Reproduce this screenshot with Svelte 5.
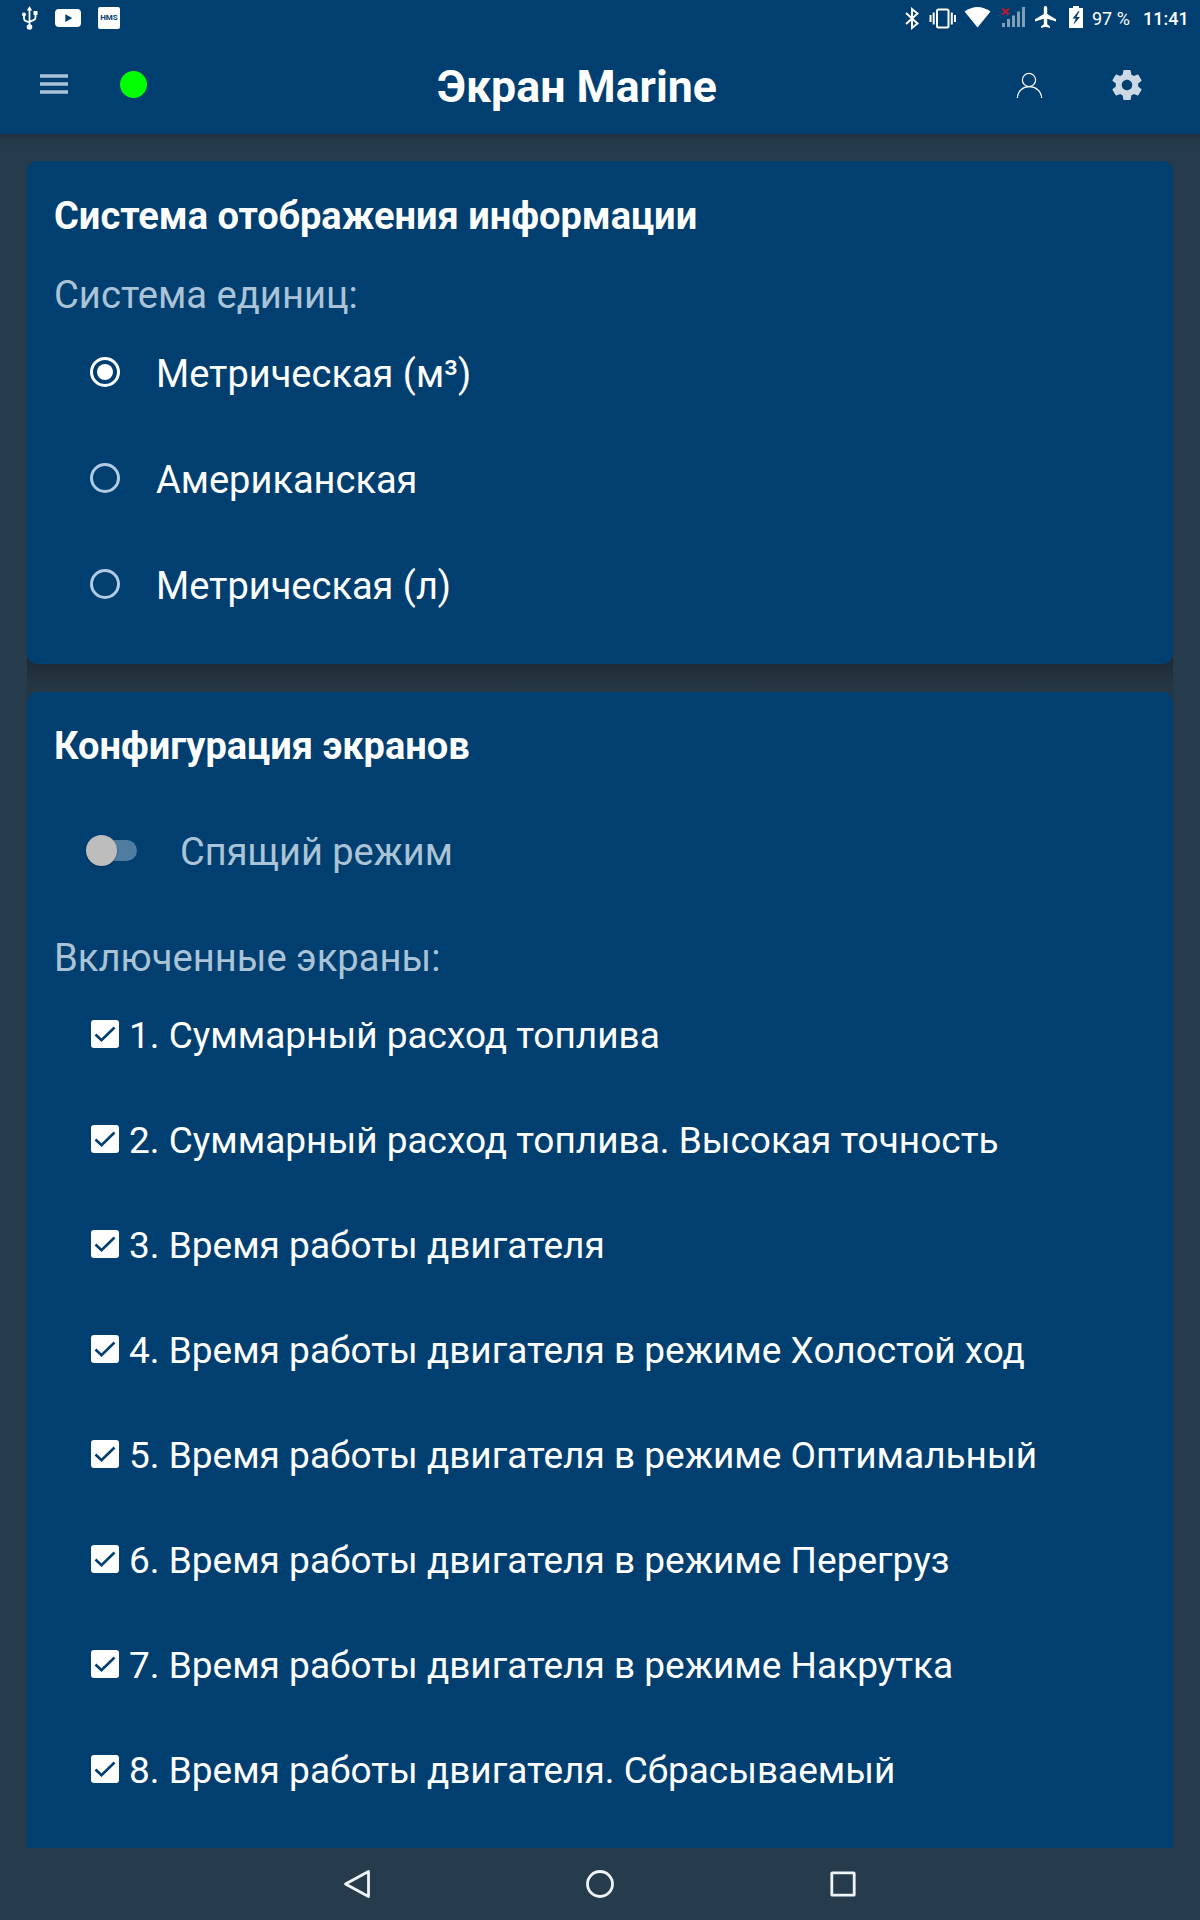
<script>
  let unitSystem = 'm3';
  let sleepMode = false;

  const units = [
    { id: 'm3', label: 'Метрическая (м³)' },
    { id: 'us', label: 'Американская' },
    { id: 'l', label: 'Метрическая (л)' }
  ];

  let screens = [
    { name: 'Суммарный расход топлива', enabled: true },
    { name: 'Суммарный расход топлива. Высокая точность', enabled: true },
    { name: 'Время работы двигателя', enabled: true },
    { name: 'Время работы двигателя в режиме Холостой ход', enabled: true },
    { name: 'Время работы двигателя в режиме Оптимальный', enabled: true },
    { name: 'Время работы двигателя в режиме Перегруз', enabled: true },
    { name: 'Время работы двигателя в режиме Накрутка', enabled: true },
    { name: 'Время работы двигателя. Сбрасываемый', enabled: true }
  ];
</script>

<div class="screen">
  <header>
    <div class="status-bar">
      <div class="status-left">
        <!-- usb -->
        <svg width="16" height="36" viewBox="22 0 16 36">
          <g fill="none" stroke="#fff" stroke-width="1.8">
            <path d="M29.5 10v17M24 16v2.5q0 2 2 2.6l3.5 1.4M35.5 15v2.5q0 2-2 2.6l-4 1.7" />
          </g>
          <path d="M29.5 6l2.700 4.500h-5.400zM33.500 11h4v4h-4z" fill="#fff" />
          <circle cx="24" cy="14.500" r="2" fill="#fff" />
          <circle cx="29.500" cy="27" r="2.800" fill="#fff" />
        </svg>
        <!-- youtube -->
        <svg width="26" height="36" viewBox="56 0 26 36">
          <rect x="56" y="9" width="26" height="18" rx="4" fill="#fff" />
          <path d="M66.300 14.200v7.800l7-3.900z" fill="#003f70" />
        </svg>
        <div class="hms">HMS</div>
      </div>
      <div class="status-right">
        <!-- bluetooth -->
        <svg width="20" height="36" viewBox="905 0 20 36">
          <path d="M906 13l11.500 10.500-5.500 4.500V9l5.500 4.500L906 24" fill="none" stroke="#fff" stroke-width="2" />
        </svg>
        <!-- vibrate -->
        <svg width="36" height="36" viewBox="925 0 36 36">
          <g fill="none" stroke="#fff" stroke-width="2">
            <rect x="937" y="9.500" width="11.500" height="18" rx="1.500" />
            <path d="M933.700 12.500v12M930.500 15v7M951.800 12.500v12M955 15v7" />
          </g>
        </svg>
        <!-- wifi -->
        <svg width="36" height="36" viewBox="961 0 36 36">
          <path d="M964.500 11.500Q977.500 2.500 990.500 11.500L977.500 27.500z" fill="#fff" />
        </svg>
        <!-- cell signal, no service -->
        <svg width="34" height="36" viewBox="997 0 34 36">
          <path d="M1002 23h3v4h-3zM1007 19h3v8h-3zM1012 15.500h3v11.500h-3zM1017 11.500h3v15.500h-3zM1022 7h3v20h-3z" fill="#7f9fb8" />
          <path d="M1002.500 8.500l6.500 6M1009 8.500l-6.500 6" stroke="#c01a2c" stroke-width="2" />
        </svg>
        <!-- airplane -->
        <svg width="34" height="36" viewBox="1031 0 34 36">
          <path d="M1045.500 6c1.100 0 1.700.9 1.700 2v6l8.800 5.200v2.300l-8.800-2.800v5.500l2.700 2v1.800l-4.400-1.200-4.400 1.200v-1.800l2.700-2v-5.500l-8.800 2.800v-2.300l8.800-5.200V8c0-1.100.6-2 1.700-2z" fill="#fff" />
        </svg>
        <!-- battery -->
        <svg width="27" height="36" viewBox="1065 0 27 36">
          <path d="M1073 6h6v2h4v20h-14V8h4z" fill="#fff" />
          <path d="M1078.500 11l-6 7.500h3.300l-2.600 6.500 6.800-8h-3.500l3-6z" fill="#003f70" />
        </svg>
        <span class="battery">97 %</span>
        <span class="clock">11:41</span>
      </div>
    </div>

    <div class="toolbar">
      <button class="menu" aria-label="Меню">
        <svg width="28" height="22" viewBox="0 0 28 22">
          <path d="M0 3h28M0 11h28M0 19h28" stroke="#a8c3da" stroke-width="3.600" />
        </svg>
      </button>
      <span class="connection"></span>
      <h1>Экран Marine</h1>
      <button class="user" aria-label="Профиль">
        <svg width="28" height="28" viewBox="0 0 28 28">
          <g fill="none" stroke="#fff" stroke-width="1.200">
            <circle cx="14" cy="9" r="6.600" />
            <path d="M2.300 27c.5-7 5.500-11.300 12-11.300S26.200 20 26.700 27" />
          </g>
        </svg>
      </button>
      <button class="settings" aria-label="Настройки">
        <svg width="36" height="36" viewBox="0 0 24 24">
          <path
            fill="#ccd8e3"
            d="M19.430 12.980c.04-.32.07-.64.07-.98s-.03-.66-.07-.98l2.110-1.650c.19-.15.24-.42.12-.64l-2-3.460c-.12-.22-.39-.3-.61-.22l-2.490 1c-.52-.4-1.080-.73-1.690-.98l-.38-2.650C14.460 2.180 14.250 2 14 2h-4c-.25 0-.46.18-.49.42l-.38 2.650c-.61.25-1.170.59-1.690.98l-2.490-1c-.23-.09-.49 0-.61.22l-2 3.460c-.13.22-.07.49.12.64l2.110 1.650c-.04.32-.07.65-.07.98s.03.66.07.98l-2.110 1.650c-.19.15-.24.42-.12.64l2 3.460c.12.22.39.3.61.22l2.490-1c.52.4 1.080.73 1.690.98l.38 2.650c.03.24.24.42.49.42h4c.25 0 .46-.18.49-.42l.38-2.650c.61-.25 1.170-.59 1.690-.98l2.490 1c.23.09.49 0 .61-.22l2-3.460c.12-.22.07-.49-.12-.64l-2.110-1.650zM12 15.500c-1.930 0-3.500-1.570-3.500-3.500s1.570-3.500 3.500-3.500 3.500 1.570 3.500 3.500-1.570 3.500-3.500 3.500z"
          />
        </svg>
      </button>
    </div>
  </header>

  <main>
    <div class="cards">
      <section class="card">
        <h2>Система отображения информации</h2>
        <p class="label">Система единиц:</p>
        <div class="radio-list">
          {#each units as unit}
            <label class="radio-row">
              <input type="radio" value={unit.id} bind:group={unitSystem} />
              <span class="radio" class:checked={unitSystem === unit.id}></span>
              <span>{unit.label}</span>
            </label>
          {/each}
        </div>
      </section>

      <section class="card screens">
        <h2>Конфигурация экранов</h2>
        <label class="switch-row">
          <input type="checkbox" bind:checked={sleepMode} />
          <span class="switch" class:on={sleepMode}>
            <span class="thumb"></span>
          </span>
          <span>Спящий режим</span>
        </label>
        <p class="label">Включенные экраны:</p>
        {#each screens as screen, i}
          <label class="check-row">
            <input type="checkbox" bind:checked={screen.enabled} />
            <span class="checkbox" class:checked={screen.enabled}>
              {#if screen.enabled}
                <svg width="28" height="28" viewBox="0 0 28 28">
                  <path d="M4.500 14.500l6 5.800L23.500 7.500" fill="none" stroke="#003f70" stroke-width="2.600" />
                </svg>
              {/if}
            </span>
            <span>{i + 1}. {screen.name}</span>
          </label>
        {/each}
      </section>
    </div>
  </main>

  <nav>
    <svg width="32" height="32" viewBox="0 0 32 32">
      <path d="M27.500 3.500v25L4.500 16z" />
    </svg>
    <svg width="32" height="32" viewBox="0 0 32 32">
      <circle cx="16" cy="16" r="12.500" />
    </svg>
    <svg width="32" height="32" viewBox="0 0 32 32">
      <rect x="4.800" y="4.800" width="22.400" height="22.400" rx="0.500" />
    </svg>
  </nav>
</div>

<style>
  :global(body) {
    margin: 0;
    background: #263c4c;
  }

  .screen {
    display: flex;
    flex-direction: column;
    width: 1200px;
    height: 1920px;
    overflow: hidden;
    background: #263c4c;
    color: #fff;
    font-family: Roboto, sans-serif;
    font-size: 38px;
  }

  h1,
  h2,
  p {
    margin: 0;
  }

  svg {
    display: block;
    flex: none;
  }

  input {
    appearance: none;
    position: absolute;
    margin: 0;
    opacity: 0;
  }

  button {
    display: block;
    padding: 0;
    border: none;
    background: none;
  }

  header {
    flex: none;
    height: 134px;
    background: #003f70;
    box-shadow: 0 2px 6px rgba(32, 20, 40, 0.5);
    z-index: 1;
  }

  .status-bar {
    display: flex;
    justify-content: space-between;
    height: 36px;
    padding: 0 13px 0 22px;
  }

  .status-left,
  .status-right {
    display: flex;
    align-items: center;
  }

  .status-left {
    gap: 17px;
  }

  .hms {
    width: 22px;
    height: 22px;
    border-radius: 2px;
    background: #fff;
    color: #003f70;
    font-size: 8px;
    font-weight: 700;
    line-height: 22px;
    text-align: center;
  }

  .battery {
    width: 51px;
    font-size: 18px;
    white-space: nowrap;
  }

  .clock {
    width: 44px;
    font-size: 18px;
    font-weight: 500;
    white-space: nowrap;
  }

  .toolbar {
    display: flex;
    align-items: center;
    height: 98px;
    padding: 0 55px 0 40px;
  }

  .menu {
    margin-bottom: 3px;
  }

  .connection {
    width: 27px;
    height: 27px;
    margin: 0 0 1px 52px;
    border-radius: 50%;
    background: #00ff00;
  }

  h1 {
    flex: 1;
    margin-left: 290px;
    font-size: 44.7px;
    font-weight: 700;
    line-height: 60px;
    padding-top: 4px;
    white-space: nowrap;
  }

  .user {
    margin-right: 66px;
  }

  main {
    flex: 1;
    min-height: 0;
    overflow: hidden;
    padding: 27px 27px 0;
  }

  /* the strip between the two cards is a shade darker than the page */
  .cards {
    display: flex;
    flex-direction: column;
    gap: 28px;
    border-radius: 10px;
    background: linear-gradient(#202d38 503px, #263744 531px);
  }

  .card {
    height: 503px;
    border-radius: 10px;
    background: #003f70;
  }

  .card.screens {
    height: 1180px;
  }

  h2 {
    padding-left: 27px;
    font-size: 38px;
    font-weight: 700;
    line-height: 110px;
  }

  .label {
    padding-left: 27px;
    font-size: 38.2px;
    line-height: 48px;
    color: #abc3d6;
  }

  .radio-list {
    padding-top: 2px;
  }

  .radio-row,
  .check-row,
  .switch-row {
    display: flex;
    align-items: center;
    white-space: nowrap;
  }

  .radio-row {
    height: 106px;
    padding-left: 63px;
    gap: 36px;
  }

  .radio {
    display: flex;
    align-items: center;
    justify-content: center;
    box-sizing: border-box;
    width: 30px;
    height: 30px;
    margin-bottom: 4px;
    border: 3px solid #b0cbe2;
    border-radius: 50%;
  }

  .radio.checked {
    border-color: #fff;
  }

  .radio.checked::after {
    content: '';
    width: 16px;
    height: 16px;
    border-radius: 50%;
    background: #fff;
  }

  .screens h2 {
    line-height: 108px;
  }

  .switch-row {
    height: 104px;
    padding-left: 59px;
    gap: 43px;
    color: #abc3d6;
  }

  .switch {
    display: flex;
    align-items: center;
    width: 44px;
    height: 21px;
    margin: 0 0 3px 7px;
    border-radius: 11px;
    background: #4f7d9f;
  }

  .switch.on {
    justify-content: flex-end;
  }

  .thumb {
    flex: none;
    width: 31px;
    height: 31px;
    margin-left: -7px;
    border-radius: 50%;
    background: #bdbdbd;
    box-shadow: 0 1px 2px rgba(0, 0, 0, 0.3);
  }

  .screens .label {
    padding-top: 29px;
    line-height: 50px;
  }

  .check-row {
    height: 105px;
    padding-left: 64px;
    gap: 10px;
    font-size: 37px;
  }

  .checkbox {
    width: 28px;
    height: 28px;
    margin-bottom: 3px;
    border-radius: 3px;
    box-shadow: inset 0 0 0 3px #b0cbe2;
  }

  .checkbox.checked {
    background: #fff;
    box-shadow: none;
  }

  nav {
    display: flex;
    flex: none;
    align-items: center;
    justify-content: center;
    gap: 211px;
    height: 72px;
    background: #263c4c;
    z-index: 1;
  }

  nav svg {
    fill: none;
    stroke: #eef4fa;
    stroke-width: 2.8;
    stroke-linejoin: round;
  }
</style>
